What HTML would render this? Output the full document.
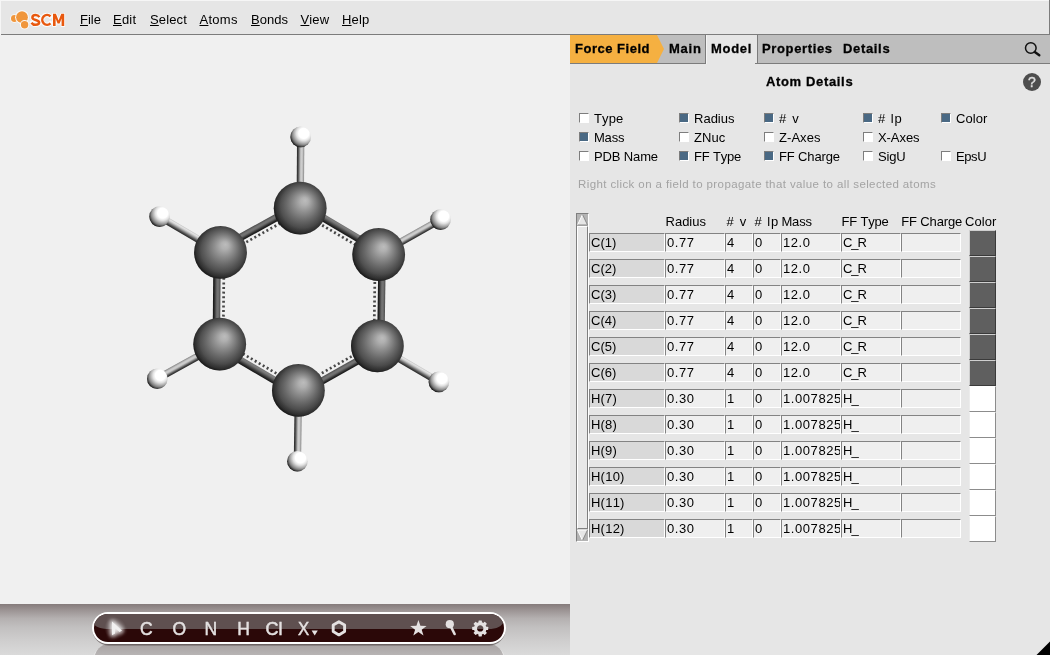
<!DOCTYPE html>
<html><head><meta charset="utf-8"><title>SCM</title>
<style>
html,body{margin:0;padding:0}
body{width:1050px;height:655px;overflow:hidden;position:relative;background:#e6e6e6;font-family:"Liberation Sans",sans-serif;color:#000}
.a{position:absolute}
.t{position:absolute;white-space:pre;font-kerning:none;line-height:16px;height:16px;font-size:13px}
.t.h{font-size:11.5px}
.b{font-weight:bold;-webkit-text-stroke:0.3px #000}
.u::first-letter{text-decoration:underline}
.cb{position:absolute;width:8px;height:8px;border:1px solid;border-color:#7d7d7d #fff #fff #7d7d7d;background:#fff}
.cb.on{background:#4a6984}
.cell{position:absolute;height:17px;border:1px solid;border-color:#838383 #fff #fff #838383;background:#efefef;box-sizing:content-box}
.cell.n{background:#d9d9d9}
.sw{position:absolute;left:969px;width:27px;height:25px;border:1px solid;box-sizing:border-box}
.sw.d{background:#5f5f5f;border-color:#cfcfcf #3a3a3a #3a3a3a #cfcfcf}
.sw.w{background:#fff;border-color:#fff #8c8c8c #8c8c8c #ececec}
</style></head><body>

<div class="a" style="left:0;top:0;width:1050px;height:35px;background:#e6e6e6"></div>
<div class="a" style="left:0;top:0;width:1050px;height:1px;background:#f6f6f6"></div>
<div class="a" style="left:0;top:0;width:1px;height:35px;background:#f6f6f6"></div>
<div class="a" style="left:1px;top:34px;width:1049px;height:1px;background:#7c7c7c"></div>
<div class="a" style="left:1049px;top:0;width:1px;height:35px;background:#7c7c7c"></div>
<div class="a" style="left:0;top:35px;width:570px;height:569px;background:#f0f0f0"></div>
<div class="a" style="left:570px;top:35px;width:480px;height:620px;background:#e6e6e6"></div>
<svg class="a" style="left:6px;top:8px" width="64" height="24" viewBox="6 8 64 24">
<circle cx="14.4" cy="18.5" r="4.2" fill="#fbfbfb"/>
<circle cx="14.4" cy="18.5" r="3.4" fill="#f0963c"/>
<circle cx="22" cy="17.2" r="6.9" fill="#fbfbfb"/>
<circle cx="24.6" cy="24.7" r="4.6" fill="#fbfbfb"/>
<circle cx="22" cy="17.2" r="5.9" fill="#f0963c"/>
<circle cx="24.6" cy="24.7" r="4.6" fill="#fbfbfb"/>
<circle cx="24.6" cy="24.7" r="3.7" fill="#f0963c"/>
<g fill="none" stroke="#fbfbfb" stroke-width="4.4" stroke-linejoin="round" stroke-linecap="round">
<path d="M39.2,16.9 C38.4,15.7 37.2,15.1 35.6,15.1 C33.6,15.1 32.4,16.1 32.4,17.5 C32.4,19.0 33.8,19.5 35.7,20.0 C37.7,20.5 39.1,21.1 39.1,22.6 C39.1,24.0 37.7,24.8 35.6,24.8 C33.8,24.8 32.5,24.1 31.7,22.9"/>
<path d="M50.3,16.6 A4.85,4.85 0 1 0 50.3,23.2"/>
<polygon points="53,26 53,13.8 55.9,13.8 58.6,20.4 61.3,13.8 64.2,13.8 64.2,26 61.6,26 61.6,18.6 59.6,23.5 57.6,23.5 55.6,18.6 55.6,26" stroke-width="1.8" fill="#fbfbfb"/>
</g>
<g fill="none" stroke="#e8580e" stroke-width="2.5">
<path d="M39.4,17.1 C38.5,15.7 37.2,15.1 35.6,15.1 C33.6,15.1 32.4,16.1 32.4,17.5 C32.4,19.0 33.8,19.5 35.7,20.0 C37.7,20.5 39.1,21.1 39.1,22.6 C39.1,24.0 37.7,24.8 35.6,24.8 C33.8,24.8 32.4,24.1 31.5,22.7"/>
<path d="M50.5,16.4 A4.85,4.85 0 1 0 50.5,23.4"/>
</g>
<polygon points="53,26 53,13.8 55.9,13.8 58.6,20.4 61.3,13.8 64.2,13.8 64.2,26 61.6,26 61.6,18.6 59.6,23.5 57.6,23.5 55.6,18.6 55.6,26" fill="#e8580e"/>
</svg>

<div class="a" style="left:570px;top:35px;width:480px;height:28px;background:#bebebe"></div>
<div class="a" style="left:570px;top:63px;width:480px;height:1px;background:#7c7c7c"></div>
<svg class="a" style="left:570px;top:35px" width="96" height="28"><polygon points="0,0 87,0 94,14 87,28 0,28" fill="#f5b041"/></svg>
<div class="a" style="left:705px;top:35px;width:53px;height:29px;background:#e6e6e6;border-left:1px solid #7c7c7c;border-right:1px solid #7c7c7c;box-sizing:border-box"></div>
<div class="a" style="left:706px;top:35px;width:1px;height:29px;background:#f4f4f4"></div>
<div class="a" style="left:755px;top:63px;width:3px;height:1px;background:#7c7c7c"></div>
<svg class="a" style="left:1020px;top:38px" width="24" height="22" viewBox="1020 38 24 22"><circle cx="1030.8" cy="48" r="5.3" fill="none" stroke="#111" stroke-width="1.5"/><line x1="1034.8" y1="52" x2="1039.3" y2="55.3" stroke="#111" stroke-width="2.4" stroke-linecap="round"/></svg>
<div class="a" style="left:1023px;top:73px;width:18px;height:18px;border-radius:9px;background:#4d4d4d;color:#dedede;-webkit-text-stroke:0.4px #dedede;font-size:14px;line-height:19px;text-align:center;will-change:transform">?</div>
<div class="cb" style="left:579px;top:113px"></div>
<div class="cb on" style="left:679px;top:113px"></div>
<div class="cb on" style="left:764px;top:113px"></div>
<div class="cb on" style="left:863px;top:113px"></div>
<div class="cb on" style="left:941px;top:113px"></div>
<div class="cb on" style="left:579px;top:132px"></div>
<div class="cb" style="left:679px;top:132px"></div>
<div class="cb" style="left:764px;top:132px"></div>
<div class="cb" style="left:863px;top:132px"></div>
<div class="cb" style="left:579px;top:151px"></div>
<div class="cb on" style="left:679px;top:151px"></div>
<div class="cb on" style="left:764px;top:151px"></div>
<div class="cb" style="left:863px;top:151px"></div>
<div class="cb" style="left:941px;top:151px"></div>
<div class="a" style="left:576px;top:213px;width:13px;height:329px;box-sizing:border-box;border:1px solid;border-color:#7f7f7f #fff #fff #7f7f7f;background:#b4b4b4"></div>
<div class="a" style="left:577px;top:226px;width:11px;height:303px;box-sizing:border-box;border:1px solid;border-color:#fff #7f7f7f #7f7f7f #fff;background:#e8e8e8"></div>
<svg class="a" style="left:577px;top:214px" width="11" height="12"><polygon points="0.5,11 5.5,0.5 10.5,11" fill="#e6e6e6"/><polyline points="0.5,11 5.5,0.5" fill="none" stroke="#fff" stroke-width="1"/><polyline points="5.5,0.5 10.5,11 0.5,11" fill="none" stroke="#8a8a8a" stroke-width="1"/></svg>
<svg class="a" style="left:577px;top:529px" width="11" height="12"><polygon points="0.5,1 10.5,1 5.5,11.5" fill="#e6e6e6"/><polyline points="10.5,1 0.5,1 5.5,11.5" fill="none" stroke="#fff" stroke-width="1"/><polyline points="5.5,11.5 10.5,1" fill="none" stroke="#8a8a8a" stroke-width="1"/></svg>

<div class="cell n" style="left:589px;top:233px;width:74px"></div>
<div class="cell" style="left:665px;top:233px;width:58px"></div>
<div class="cell" style="left:725px;top:233px;width:26px"></div>
<div class="cell" style="left:753px;top:233px;width:26px"></div>
<div class="cell" style="left:781px;top:233px;width:58px"></div>
<div class="cell" style="left:841px;top:233px;width:58px"></div>
<div class="cell" style="left:901px;top:233px;width:58px"></div>
<div class="sw d" style="top:230px;height:26px"></div>
<div class="cell n" style="left:589px;top:259px;width:74px"></div>
<div class="cell" style="left:665px;top:259px;width:58px"></div>
<div class="cell" style="left:725px;top:259px;width:26px"></div>
<div class="cell" style="left:753px;top:259px;width:26px"></div>
<div class="cell" style="left:781px;top:259px;width:58px"></div>
<div class="cell" style="left:841px;top:259px;width:58px"></div>
<div class="cell" style="left:901px;top:259px;width:58px"></div>
<div class="sw d" style="top:256px;height:26px"></div>
<div class="cell n" style="left:589px;top:285px;width:74px"></div>
<div class="cell" style="left:665px;top:285px;width:58px"></div>
<div class="cell" style="left:725px;top:285px;width:26px"></div>
<div class="cell" style="left:753px;top:285px;width:26px"></div>
<div class="cell" style="left:781px;top:285px;width:58px"></div>
<div class="cell" style="left:841px;top:285px;width:58px"></div>
<div class="cell" style="left:901px;top:285px;width:58px"></div>
<div class="sw d" style="top:282px;height:26px"></div>
<div class="cell n" style="left:589px;top:311px;width:74px"></div>
<div class="cell" style="left:665px;top:311px;width:58px"></div>
<div class="cell" style="left:725px;top:311px;width:26px"></div>
<div class="cell" style="left:753px;top:311px;width:26px"></div>
<div class="cell" style="left:781px;top:311px;width:58px"></div>
<div class="cell" style="left:841px;top:311px;width:58px"></div>
<div class="cell" style="left:901px;top:311px;width:58px"></div>
<div class="sw d" style="top:308px;height:26px"></div>
<div class="cell n" style="left:589px;top:337px;width:74px"></div>
<div class="cell" style="left:665px;top:337px;width:58px"></div>
<div class="cell" style="left:725px;top:337px;width:26px"></div>
<div class="cell" style="left:753px;top:337px;width:26px"></div>
<div class="cell" style="left:781px;top:337px;width:58px"></div>
<div class="cell" style="left:841px;top:337px;width:58px"></div>
<div class="cell" style="left:901px;top:337px;width:58px"></div>
<div class="sw d" style="top:334px;height:26px"></div>
<div class="cell n" style="left:589px;top:363px;width:74px"></div>
<div class="cell" style="left:665px;top:363px;width:58px"></div>
<div class="cell" style="left:725px;top:363px;width:26px"></div>
<div class="cell" style="left:753px;top:363px;width:26px"></div>
<div class="cell" style="left:781px;top:363px;width:58px"></div>
<div class="cell" style="left:841px;top:363px;width:58px"></div>
<div class="cell" style="left:901px;top:363px;width:58px"></div>
<div class="sw d" style="top:360px;height:26px"></div>
<div class="cell n" style="left:589px;top:389px;width:74px"></div>
<div class="cell" style="left:665px;top:389px;width:58px"></div>
<div class="cell" style="left:725px;top:389px;width:26px"></div>
<div class="cell" style="left:753px;top:389px;width:26px"></div>
<div class="cell" style="left:781px;top:389px;width:58px"></div>
<div class="cell" style="left:841px;top:389px;width:58px"></div>
<div class="cell" style="left:901px;top:389px;width:58px"></div>
<div class="sw w" style="top:386px;height:26px"></div>
<div class="cell n" style="left:589px;top:415px;width:74px"></div>
<div class="cell" style="left:665px;top:415px;width:58px"></div>
<div class="cell" style="left:725px;top:415px;width:26px"></div>
<div class="cell" style="left:753px;top:415px;width:26px"></div>
<div class="cell" style="left:781px;top:415px;width:58px"></div>
<div class="cell" style="left:841px;top:415px;width:58px"></div>
<div class="cell" style="left:901px;top:415px;width:58px"></div>
<div class="sw w" style="top:412px;height:26px"></div>
<div class="cell n" style="left:589px;top:441px;width:74px"></div>
<div class="cell" style="left:665px;top:441px;width:58px"></div>
<div class="cell" style="left:725px;top:441px;width:26px"></div>
<div class="cell" style="left:753px;top:441px;width:26px"></div>
<div class="cell" style="left:781px;top:441px;width:58px"></div>
<div class="cell" style="left:841px;top:441px;width:58px"></div>
<div class="cell" style="left:901px;top:441px;width:58px"></div>
<div class="sw w" style="top:438px;height:26px"></div>
<div class="cell n" style="left:589px;top:467px;width:74px"></div>
<div class="cell" style="left:665px;top:467px;width:58px"></div>
<div class="cell" style="left:725px;top:467px;width:26px"></div>
<div class="cell" style="left:753px;top:467px;width:26px"></div>
<div class="cell" style="left:781px;top:467px;width:58px"></div>
<div class="cell" style="left:841px;top:467px;width:58px"></div>
<div class="cell" style="left:901px;top:467px;width:58px"></div>
<div class="sw w" style="top:464px;height:26px"></div>
<div class="cell n" style="left:589px;top:493px;width:74px"></div>
<div class="cell" style="left:665px;top:493px;width:58px"></div>
<div class="cell" style="left:725px;top:493px;width:26px"></div>
<div class="cell" style="left:753px;top:493px;width:26px"></div>
<div class="cell" style="left:781px;top:493px;width:58px"></div>
<div class="cell" style="left:841px;top:493px;width:58px"></div>
<div class="cell" style="left:901px;top:493px;width:58px"></div>
<div class="sw w" style="top:490px;height:26px"></div>
<div class="cell n" style="left:589px;top:519px;width:74px"></div>
<div class="cell" style="left:665px;top:519px;width:58px"></div>
<div class="cell" style="left:725px;top:519px;width:26px"></div>
<div class="cell" style="left:753px;top:519px;width:26px"></div>
<div class="cell" style="left:781px;top:519px;width:58px"></div>
<div class="cell" style="left:841px;top:519px;width:58px"></div>
<div class="cell" style="left:901px;top:519px;width:58px"></div>
<div class="sw w" style="top:516px;height:26px"></div>
<svg class="a" style="left:1036px;top:641px" width="14" height="14"><polygon points="14,0.5 14,14 0.5,14" fill="#000"/></svg>
<svg class="a" style="left:0;top:35px" width="570" height="569" viewBox="0 35 570 569">
<defs>
<radialGradient id="gc" cx="50%" cy="50%" r="61%" fx="59.5%" fy="35%">
<stop offset="0" stop-color="#bcbcbc"/><stop offset="0.12" stop-color="#b0b0b0"/><stop offset="0.30" stop-color="#8e8e8e"/><stop offset="0.50" stop-color="#6a6a6a"/><stop offset="0.68" stop-color="#4c4c4c"/><stop offset="0.85" stop-color="#343434"/><stop offset="1" stop-color="#1c1c1c"/>
</radialGradient>
<radialGradient id="gh" cx="65%" cy="33%" r="80%">
<stop offset="0" stop-color="#fff"/><stop offset="0.31" stop-color="#fff"/><stop offset="0.45" stop-color="#e2e2e2"/><stop offset="0.59" stop-color="#b2b2b2"/><stop offset="0.73" stop-color="#7e7e7e"/><stop offset="0.87" stop-color="#4a4a4a"/><stop offset="1" stop-color="#242424"/>
</radialGradient>
<radialGradient id="gce" cx="55%" cy="45%" r="57%">
<stop offset="0" stop-color="#000" stop-opacity="0"/><stop offset="0.74" stop-color="#000" stop-opacity="0"/><stop offset="0.90" stop-color="#000" stop-opacity="0.2"/><stop offset="1" stop-color="#000" stop-opacity="0.55"/>
</radialGradient>
<radialGradient id="ghe" cx="56%" cy="44%" r="58%">
<stop offset="0" stop-color="#000" stop-opacity="0"/><stop offset="0.78" stop-color="#000" stop-opacity="0"/><stop offset="0.90" stop-color="#000" stop-opacity="0.22"/><stop offset="1" stop-color="#000" stop-opacity="0.7"/>
</radialGradient>
</defs>
<linearGradient id="b1" gradientUnits="userSpaceOnUse" x1="343.06" y1="225.23" x2="339.30" y2="231.61"><stop offset="0.000" stop-color="#6e6e6e"/><stop offset="0.083" stop-color="#777777"/><stop offset="0.167" stop-color="#7f7f7f"/><stop offset="0.250" stop-color="#797979"/><stop offset="0.333" stop-color="#737373"/><stop offset="0.417" stop-color="#666666"/><stop offset="0.500" stop-color="#595959"/><stop offset="0.583" stop-color="#4b4b4b"/><stop offset="0.667" stop-color="#3c3c3c"/><stop offset="0.750" stop-color="#2f2f2f"/><stop offset="0.833" stop-color="#252525"/><stop offset="0.917" stop-color="#1c1c1c"/><stop offset="1.000" stop-color="#171717"/></linearGradient>
<line x1="301.93" y1="205.27" x2="380.43" y2="251.57" stroke="url(#b1)" stroke-width="7.4"/>
<line x1="298.42" y1="211.21" x2="376.92" y2="257.51" stroke="#474747" stroke-width="2.7" stroke-dasharray="2 2.6"/>
<linearGradient id="b2" gradientUnits="userSpaceOnUse" x1="385.15" y1="300.30" x2="377.75" y2="300.20"><stop offset="0.000" stop-color="#4a4a4a"/><stop offset="0.083" stop-color="#585858"/><stop offset="0.167" stop-color="#646464"/><stop offset="0.250" stop-color="#6f6f6f"/><stop offset="0.333" stop-color="#737373"/><stop offset="0.417" stop-color="#727272"/><stop offset="0.500" stop-color="#6b6b6b"/><stop offset="0.583" stop-color="#5b5b5b"/><stop offset="0.667" stop-color="#4a4a4a"/><stop offset="0.750" stop-color="#373737"/><stop offset="0.833" stop-color="#282828"/><stop offset="0.917" stop-color="#1d1d1d"/><stop offset="1.000" stop-color="#171717"/></linearGradient>
<line x1="382.10" y1="254.55" x2="380.80" y2="345.95" stroke="url(#b2)" stroke-width="7.4"/>
<line x1="375.20" y1="254.45" x2="373.90" y2="345.85" stroke="#474747" stroke-width="2.7" stroke-dasharray="2 2.6"/>
<linearGradient id="b3" gradientUnits="userSpaceOnUse" x1="341.38" y1="374.34" x2="337.75" y2="367.89"><stop offset="0.000" stop-color="#171717"/><stop offset="0.083" stop-color="#1d1d1d"/><stop offset="0.167" stop-color="#282828"/><stop offset="0.250" stop-color="#373737"/><stop offset="0.333" stop-color="#4a4a4a"/><stop offset="0.417" stop-color="#5b5b5b"/><stop offset="0.500" stop-color="#6b6b6b"/><stop offset="0.583" stop-color="#727272"/><stop offset="0.667" stop-color="#737373"/><stop offset="0.750" stop-color="#6f6f6f"/><stop offset="0.833" stop-color="#646464"/><stop offset="0.917" stop-color="#585858"/><stop offset="1.000" stop-color="#4a4a4a"/></linearGradient>
<line x1="379.07" y1="348.86" x2="300.07" y2="393.36" stroke="url(#b3)" stroke-width="7.4"/>
<line x1="375.68" y1="342.85" x2="296.68" y2="387.35" stroke="#474747" stroke-width="2.7" stroke-dasharray="2 2.6"/>
<linearGradient id="b4" gradientUnits="userSpaceOnUse" x1="255.46" y1="373.42" x2="259.20" y2="367.04"><stop offset="0.000" stop-color="#171717"/><stop offset="0.083" stop-color="#1c1c1c"/><stop offset="0.167" stop-color="#252525"/><stop offset="0.250" stop-color="#2f2f2f"/><stop offset="0.333" stop-color="#3c3c3c"/><stop offset="0.417" stop-color="#4b4b4b"/><stop offset="0.500" stop-color="#595959"/><stop offset="0.583" stop-color="#666666"/><stop offset="0.667" stop-color="#737373"/><stop offset="0.750" stop-color="#797979"/><stop offset="0.833" stop-color="#7f7f7f"/><stop offset="0.917" stop-color="#777777"/><stop offset="1.000" stop-color="#6e6e6e"/></linearGradient>
<line x1="296.68" y1="393.33" x2="217.98" y2="347.13" stroke="url(#b4)" stroke-width="7.4"/>
<line x1="300.17" y1="387.38" x2="221.47" y2="341.18" stroke="#474747" stroke-width="2.7" stroke-dasharray="2 2.6"/>
<linearGradient id="b5" gradientUnits="userSpaceOnUse" x1="213.00" y1="298.24" x2="220.40" y2="298.30"><stop offset="0.000" stop-color="#171717"/><stop offset="0.083" stop-color="#1d1d1d"/><stop offset="0.167" stop-color="#282828"/><stop offset="0.250" stop-color="#373737"/><stop offset="0.333" stop-color="#4a4a4a"/><stop offset="0.417" stop-color="#5b5b5b"/><stop offset="0.500" stop-color="#6b6b6b"/><stop offset="0.583" stop-color="#727272"/><stop offset="0.667" stop-color="#737373"/><stop offset="0.750" stop-color="#6f6f6f"/><stop offset="0.833" stop-color="#646464"/><stop offset="0.917" stop-color="#585858"/><stop offset="1.000" stop-color="#4a4a4a"/></linearGradient>
<line x1="216.30" y1="344.17" x2="217.10" y2="252.37" stroke="url(#b5)" stroke-width="7.4"/>
<line x1="223.20" y1="344.23" x2="224.00" y2="252.43" stroke="#474747" stroke-width="2.7" stroke-dasharray="2 2.6"/>
<linearGradient id="b6" gradientUnits="userSpaceOnUse" x1="256.91" y1="224.09" x2="260.50" y2="230.56"><stop offset="0.000" stop-color="#4a4a4a"/><stop offset="0.083" stop-color="#585858"/><stop offset="0.167" stop-color="#646464"/><stop offset="0.250" stop-color="#6f6f6f"/><stop offset="0.333" stop-color="#737373"/><stop offset="0.417" stop-color="#727272"/><stop offset="0.500" stop-color="#6b6b6b"/><stop offset="0.583" stop-color="#5b5b5b"/><stop offset="0.667" stop-color="#4a4a4a"/><stop offset="0.750" stop-color="#373737"/><stop offset="0.833" stop-color="#282828"/><stop offset="0.917" stop-color="#1d1d1d"/><stop offset="1.000" stop-color="#171717"/></linearGradient>
<line x1="218.85" y1="249.43" x2="298.55" y2="205.23" stroke="url(#b6)" stroke-width="7.4"/>
<line x1="222.20" y1="255.46" x2="301.90" y2="211.26" stroke="#474747" stroke-width="2.7" stroke-dasharray="2 2.6"/>
<linearGradient id="b7" gradientUnits="userSpaceOnUse" x1="296.80" y1="172.52" x2="304.10" y2="172.58"><stop offset="0.000" stop-color="#292929"/><stop offset="0.083" stop-color="#353535"/><stop offset="0.167" stop-color="#494949"/><stop offset="0.250" stop-color="#636363"/><stop offset="0.333" stop-color="#848484"/><stop offset="0.417" stop-color="#a3a3a3"/><stop offset="0.500" stop-color="#c0c0c0"/><stop offset="0.583" stop-color="#cccccc"/><stop offset="0.667" stop-color="#cdcdcd"/><stop offset="0.750" stop-color="#c7c7c7"/><stop offset="0.833" stop-color="#b3b3b3"/><stop offset="0.917" stop-color="#9d9d9d"/><stop offset="1.000" stop-color="#848484"/></linearGradient>
<line x1="300.20" y1="208.20" x2="300.70" y2="136.90" stroke="url(#b7)" stroke-width="7.3"/>
<linearGradient id="b8" gradientUnits="userSpaceOnUse" x1="407.86" y1="233.87" x2="411.44" y2="240.23"><stop offset="0.000" stop-color="#848484"/><stop offset="0.083" stop-color="#9d9d9d"/><stop offset="0.167" stop-color="#b3b3b3"/><stop offset="0.250" stop-color="#c7c7c7"/><stop offset="0.333" stop-color="#cdcdcd"/><stop offset="0.417" stop-color="#cccccc"/><stop offset="0.500" stop-color="#c0c0c0"/><stop offset="0.583" stop-color="#a3a3a3"/><stop offset="0.667" stop-color="#848484"/><stop offset="0.750" stop-color="#636363"/><stop offset="0.833" stop-color="#494949"/><stop offset="0.917" stop-color="#353535"/><stop offset="1.000" stop-color="#292929"/></linearGradient>
<line x1="378.70" y1="254.50" x2="440.60" y2="219.60" stroke="url(#b8)" stroke-width="7.3"/>
<linearGradient id="b9" gradientUnits="userSpaceOnUse" x1="409.99" y1="360.75" x2="406.31" y2="367.05"><stop offset="0.000" stop-color="#c5c5c5"/><stop offset="0.083" stop-color="#d5d5d5"/><stop offset="0.167" stop-color="#e3e3e3"/><stop offset="0.250" stop-color="#d9d9d9"/><stop offset="0.333" stop-color="#cdcdcd"/><stop offset="0.417" stop-color="#b6b6b6"/><stop offset="0.500" stop-color="#9f9f9f"/><stop offset="0.583" stop-color="#868686"/><stop offset="0.667" stop-color="#6c6c6c"/><stop offset="0.750" stop-color="#545454"/><stop offset="0.833" stop-color="#424242"/><stop offset="0.917" stop-color="#333333"/><stop offset="1.000" stop-color="#292929"/></linearGradient>
<line x1="377.40" y1="345.90" x2="438.90" y2="381.90" stroke="url(#b9)" stroke-width="7.3"/>
<linearGradient id="b10" gradientUnits="userSpaceOnUse" x1="301.55" y1="425.90" x2="294.25" y2="425.80"><stop offset="0.000" stop-color="#848484"/><stop offset="0.083" stop-color="#9d9d9d"/><stop offset="0.167" stop-color="#b3b3b3"/><stop offset="0.250" stop-color="#c7c7c7"/><stop offset="0.333" stop-color="#cdcdcd"/><stop offset="0.417" stop-color="#cccccc"/><stop offset="0.500" stop-color="#c0c0c0"/><stop offset="0.583" stop-color="#a3a3a3"/><stop offset="0.667" stop-color="#848484"/><stop offset="0.750" stop-color="#636363"/><stop offset="0.833" stop-color="#494949"/><stop offset="0.917" stop-color="#353535"/><stop offset="1.000" stop-color="#292929"/></linearGradient>
<line x1="298.40" y1="390.40" x2="297.40" y2="461.30" stroke="url(#b10)" stroke-width="7.3"/>
<linearGradient id="b11" gradientUnits="userSpaceOnUse" x1="190.27" y1="364.69" x2="186.73" y2="358.31"><stop offset="0.000" stop-color="#292929"/><stop offset="0.083" stop-color="#353535"/><stop offset="0.167" stop-color="#484848"/><stop offset="0.250" stop-color="#626262"/><stop offset="0.333" stop-color="#848484"/><stop offset="0.417" stop-color="#a2a2a2"/><stop offset="0.500" stop-color="#c0c0c0"/><stop offset="0.583" stop-color="#cbcbcb"/><stop offset="0.667" stop-color="#cdcdcd"/><stop offset="0.750" stop-color="#c7c7c7"/><stop offset="0.833" stop-color="#b4b4b4"/><stop offset="0.917" stop-color="#9e9e9e"/><stop offset="1.000" stop-color="#858585"/></linearGradient>
<line x1="219.70" y1="344.20" x2="157.30" y2="378.80" stroke="url(#b11)" stroke-width="7.3"/>
<linearGradient id="b12" gradientUnits="userSpaceOnUse" x1="188.20" y1="237.65" x2="191.90" y2="231.35"><stop offset="0.000" stop-color="#292929"/><stop offset="0.083" stop-color="#333333"/><stop offset="0.167" stop-color="#424242"/><stop offset="0.250" stop-color="#545454"/><stop offset="0.333" stop-color="#6c6c6c"/><stop offset="0.417" stop-color="#868686"/><stop offset="0.500" stop-color="#9f9f9f"/><stop offset="0.583" stop-color="#b6b6b6"/><stop offset="0.667" stop-color="#cdcdcd"/><stop offset="0.750" stop-color="#d9d9d9"/><stop offset="0.833" stop-color="#e3e3e3"/><stop offset="0.917" stop-color="#d5d5d5"/><stop offset="1.000" stop-color="#c5c5c5"/></linearGradient>
<line x1="220.50" y1="252.40" x2="159.60" y2="216.60" stroke="url(#b12)" stroke-width="7.3"/>
<circle cx="300.2" cy="208.2" r="26.4" fill="url(#gc)"/><circle cx="300.2" cy="208.2" r="26.4" fill="url(#gce)"/>
<circle cx="378.7" cy="254.5" r="26.4" fill="url(#gc)"/><circle cx="378.7" cy="254.5" r="26.4" fill="url(#gce)"/>
<circle cx="377.4" cy="345.9" r="26.4" fill="url(#gc)"/><circle cx="377.4" cy="345.9" r="26.4" fill="url(#gce)"/>
<circle cx="298.4" cy="390.4" r="26.4" fill="url(#gc)"/><circle cx="298.4" cy="390.4" r="26.4" fill="url(#gce)"/>
<circle cx="219.7" cy="344.2" r="26.4" fill="url(#gc)"/><circle cx="219.7" cy="344.2" r="26.4" fill="url(#gce)"/>
<circle cx="220.5" cy="252.4" r="26.4" fill="url(#gc)"/><circle cx="220.5" cy="252.4" r="26.4" fill="url(#gce)"/>
<circle cx="300.7" cy="136.9" r="10.3" fill="url(#gh)"/><circle cx="300.7" cy="136.9" r="10.3" fill="url(#ghe)"/>
<circle cx="440.6" cy="219.6" r="10.3" fill="url(#gh)"/><circle cx="440.6" cy="219.6" r="10.3" fill="url(#ghe)"/>
<circle cx="438.9" cy="381.9" r="10.3" fill="url(#gh)"/><circle cx="438.9" cy="381.9" r="10.3" fill="url(#ghe)"/>
<circle cx="297.4" cy="461.3" r="10.3" fill="url(#gh)"/><circle cx="297.4" cy="461.3" r="10.3" fill="url(#ghe)"/>
<circle cx="157.3" cy="378.8" r="10.3" fill="url(#gh)"/><circle cx="157.3" cy="378.8" r="10.3" fill="url(#ghe)"/>
<circle cx="159.6" cy="216.6" r="10.3" fill="url(#gh)"/><circle cx="159.6" cy="216.6" r="10.3" fill="url(#ghe)"/>
</svg>
<div class="a" style="left:0;top:604px;width:570px;height:51px;background:linear-gradient(to bottom,#857b7b 0,#9b9393 12%,#b4b0b0 28%,#c2c0c0 46%,#cfcece 72%,#dadada 100%)"></div>
<svg class="a" style="left:80px;top:604px;will-change:transform" width="440" height="51" viewBox="80 604 440 51">
<defs>
<clipPath id="pc"><rect x="94" y="614" width="410" height="28" rx="14"/></clipPath>
<linearGradient id="rf" x1="0" y1="0" x2="0" y2="1"><stop offset="0" stop-color="#a8a3a3"/><stop offset="0.4" stop-color="#b9b6b6"/><stop offset="1" stop-color="#c8c6c6"/></linearGradient>
<filter id="bl" x="-1" y="-1" width="3" height="3"><feGaussianBlur stdDeviation="1.9"/></filter>
<radialGradient id="glow"><stop offset="0" stop-color="#fff" stop-opacity="0.75"/><stop offset="0.5" stop-color="#fff" stop-opacity="0.3"/><stop offset="1" stop-color="#fff" stop-opacity="0"/></radialGradient>
</defs>
<!-- reflection -->
<rect x="92.5" y="645" width="413" height="32" rx="16" fill="#e6e5e5"/>
<rect x="94.5" y="644" width="409" height="31" rx="14.5" fill="url(#rf)"/>
<!-- shadow -->
<rect x="92.5" y="613" width="413" height="32.6" rx="16.3" fill="#3a3030" opacity="0.55"/>
<!-- pill -->
<rect x="92" y="612" width="414" height="32" rx="16" fill="#fff"/>
<rect x="94" y="614" width="410" height="28" rx="14" fill="#2b0808"/>
<g clip-path="url(#pc)">
<path d="M94,614 H504 V621 C502,626.5 497,629 488,629 H110 C101,629 96,627.5 94,624 Z" fill="#5f5050"/>
<circle cx="115" cy="628.3" r="11" fill="url(#glow)" opacity="0.55"/>
<polygon points="112,621.5 122,630.4 119.6,631.9 115.2,628.3 115,633.6 112,635.2" fill="#fff" stroke="#fff" stroke-width="3.5" stroke-linejoin="round" filter="url(#bl)" opacity="0.85"/>
</g>
<!-- cursor -->
<polygon points="112,621.5 122,630.4 119.6,631.9 115.2,628.3 115,633.6 112,635.2" fill="#f2f0f0"/>
<g fill="#e4e1e1" font-family="Liberation Sans" font-size="17.5" stroke="#e4e1e1" stroke-width="0.45">
<text x="140" y="634.6">C</text>
<text x="172.6" y="634.6">O</text>
<text x="204.6" y="634.6">N</text>
<text x="237.2" y="634.6">H</text>
<text x="265.6" y="634.6" textLength="17" lengthAdjust="spacingAndGlyphs">Cl</text>
<text x="298" y="634.6" textLength="11.2" lengthAdjust="spacingAndGlyphs">X</text>
</g>
<polygon points="311.6,630.6 317.8,630.6 314.7,635.6" fill="#e4e1e1"/>
<polygon points="338.9,621.7 344.6,625 344.6,631.6 338.9,634.9 333.2,631.6 333.2,625" fill="none" stroke="#e4e1e1" stroke-width="2.9" stroke-linejoin="round"/>
<!-- star -->
<polygon id="star" fill="#e4e1e1" points="418.4,620.0 420.4,625.8 426.6,625.9 421.7,629.7 423.5,635.6 418.4,632.1 413.3,635.6 415.1,629.7 410.2,625.9 416.4,625.8"/>
<!-- lollipop -->
<circle cx="449.8" cy="624.2" r="4.1" fill="#e4e1e1"/>
<line x1="450.6" y1="626" x2="454.6" y2="634" stroke="#e4e1e1" stroke-width="2.6" stroke-linecap="round"/>
<!-- gear -->
<g transform="translate(480.2,628.4)">
<circle r="4.75" fill="none" stroke="#e4e1e1" stroke-width="3.1"/>
<g fill="#e4e1e1">
<rect x="-1.7" y="-8" width="3.4" height="3.2" rx="0.6"/>
<rect x="-1.7" y="-8" width="3.4" height="3.2" rx="0.6" transform="rotate(45)"/>
<rect x="-1.7" y="-8" width="3.4" height="3.2" rx="0.6" transform="rotate(90)"/>
<rect x="-1.7" y="-8" width="3.4" height="3.2" rx="0.6" transform="rotate(135)"/>
<rect x="-1.7" y="-8" width="3.4" height="3.2" rx="0.6" transform="rotate(180)"/>
<rect x="-1.7" y="-8" width="3.4" height="3.2" rx="0.6" transform="rotate(225)"/>
<rect x="-1.7" y="-8" width="3.4" height="3.2" rx="0.6" transform="rotate(270)"/>
<rect x="-1.7" y="-8" width="3.4" height="3.2" rx="0.6" transform="rotate(315)"/>
</g></g>
</svg>

<div class="a" style="left:0;top:0;width:1050px;height:655px;will-change:transform">
<div class="t" style="left:80px;top:11.50px;letter-spacing:0.0px"><u>F</u>ile</div>
<div class="t" style="left:113px;top:11.50px;letter-spacing:0.211px"><u>E</u>dit</div>
<div class="t" style="left:150px;top:11.50px;letter-spacing:0.148px"><u>S</u>elect</div>
<div class="t" style="left:199.5px;top:11.50px;letter-spacing:0.272px"><u>A</u>toms</div>
<div class="t" style="left:251px;top:11.50px;letter-spacing:0.037px"><u>B</u>onds</div>
<div class="t" style="left:300.5px;top:11.50px;letter-spacing:0.141px"><u>V</u>iew</div>
<div class="t" style="left:342px;top:11.50px;letter-spacing:0.152px"><u>H</u>elp</div>
<div class="t b" style="left:575px;top:40.50px;letter-spacing:0.509px">Force Field</div>
<div class="t b" style="left:669px;top:40.50px;letter-spacing:0.77px">Main</div>
<div class="t b" style="left:711px;top:40.50px;letter-spacing:0.694px">Model</div>
<div class="t b" style="left:762px;top:40.50px;letter-spacing:0.642px">Properties</div>
<div class="t b" style="left:843px;top:40.50px;letter-spacing:0.667px">Details</div>
<div class="t b" style="left:766px;top:73.50px;letter-spacing:0.65px">Atom Details</div>
<div class="t" style="left:594px;top:110.50px;letter-spacing:0.133px">Type</div>
<div class="t" style="left:694px;top:110.50px;letter-spacing:0.005px">Radius</div>
<div class="t" style="left:779px;top:110.50px;letter-spacing:1.214px"># v</div>
<div class="t" style="left:878px;top:110.50px;letter-spacing:0.965px"># lp</div>
<div class="t" style="left:956px;top:110.50px;letter-spacing:0.053px">Color</div>
<div class="t" style="left:594px;top:129.50px;letter-spacing:-0.211px">Mass</div>
<div class="t" style="left:694px;top:129.50px;letter-spacing:0.086px">ZNuc</div>
<div class="t" style="left:779px;top:129.50px;letter-spacing:0.055px">Z-Axes</div>
<div class="t" style="left:878px;top:129.50px;letter-spacing:-0.068px">X-Axes</div>
<div class="t" style="left:594px;top:148.50px;letter-spacing:-0.137px">PDB Name</div>
<div class="t" style="left:694px;top:148.50px;letter-spacing:-0.192px">FF Type</div>
<div class="t" style="left:779px;top:148.50px;letter-spacing:-0.139px">FF Charge</div>
<div class="t" style="left:878px;top:148.50px;letter-spacing:-0.207px">SigU</div>
<div class="t" style="left:956px;top:148.50px;letter-spacing:-0.391px">EpsU</div>
<div class="t h" style="left:578px;top:176.02px;letter-spacing:0.397px;color:#a3a3a3">Right click on a field to propagate that value to all selected atoms</div>
<div class="t" style="left:665.5px;top:213.50px;letter-spacing:0.005px">Radius</div>
<div class="t" style="left:726.5px;top:213.50px;letter-spacing:1.214px"># v</div>
<div class="t" style="left:754.5px;top:213.50px;letter-spacing:0.965px"># lp</div>
<div class="t" style="left:781.5px;top:213.50px;letter-spacing:-0.211px">Mass</div>
<div class="t" style="left:841.5px;top:213.50px;letter-spacing:-0.192px">FF Type</div>
<div class="t" style="left:901.3px;top:213.50px;letter-spacing:-0.139px">FF Charge</div>
<div class="t" style="left:965px;top:213.50px;letter-spacing:0.053px">Color</div>
<div class="t" style="left:591px;top:234.50px;letter-spacing:0.027px;width:73px;overflow:hidden">C(1)</div>
<div class="t" style="left:667px;top:234.50px;letter-spacing:0.552px;width:57px;overflow:hidden">0.77</div>
<div class="t" style="left:727px;top:234.50px;letter-spacing:0.406px;width:25px;overflow:hidden">4</div>
<div class="t" style="left:755px;top:234.50px;letter-spacing:0.406px;width:25px;overflow:hidden">0</div>
<div class="t" style="left:783px;top:234.50px;letter-spacing:0.552px;width:57px;overflow:hidden">12.0</div>
<div class="t" style="left:843px;top:234.50px;letter-spacing:-1.099px;width:57px;overflow:hidden">C_R</div>
<div class="t" style="left:591px;top:260.50px;letter-spacing:0.027px;width:73px;overflow:hidden">C(2)</div>
<div class="t" style="left:667px;top:260.50px;letter-spacing:0.552px;width:57px;overflow:hidden">0.77</div>
<div class="t" style="left:727px;top:260.50px;letter-spacing:0.406px;width:25px;overflow:hidden">4</div>
<div class="t" style="left:755px;top:260.50px;letter-spacing:0.406px;width:25px;overflow:hidden">0</div>
<div class="t" style="left:783px;top:260.50px;letter-spacing:0.552px;width:57px;overflow:hidden">12.0</div>
<div class="t" style="left:843px;top:260.50px;letter-spacing:-1.099px;width:57px;overflow:hidden">C_R</div>
<div class="t" style="left:591px;top:286.50px;letter-spacing:0.027px;width:73px;overflow:hidden">C(3)</div>
<div class="t" style="left:667px;top:286.50px;letter-spacing:0.552px;width:57px;overflow:hidden">0.77</div>
<div class="t" style="left:727px;top:286.50px;letter-spacing:0.406px;width:25px;overflow:hidden">4</div>
<div class="t" style="left:755px;top:286.50px;letter-spacing:0.406px;width:25px;overflow:hidden">0</div>
<div class="t" style="left:783px;top:286.50px;letter-spacing:0.552px;width:57px;overflow:hidden">12.0</div>
<div class="t" style="left:843px;top:286.50px;letter-spacing:-1.099px;width:57px;overflow:hidden">C_R</div>
<div class="t" style="left:591px;top:312.50px;letter-spacing:0.027px;width:73px;overflow:hidden">C(4)</div>
<div class="t" style="left:667px;top:312.50px;letter-spacing:0.552px;width:57px;overflow:hidden">0.77</div>
<div class="t" style="left:727px;top:312.50px;letter-spacing:0.406px;width:25px;overflow:hidden">4</div>
<div class="t" style="left:755px;top:312.50px;letter-spacing:0.406px;width:25px;overflow:hidden">0</div>
<div class="t" style="left:783px;top:312.50px;letter-spacing:0.552px;width:57px;overflow:hidden">12.0</div>
<div class="t" style="left:843px;top:312.50px;letter-spacing:-1.099px;width:57px;overflow:hidden">C_R</div>
<div class="t" style="left:591px;top:338.50px;letter-spacing:0.027px;width:73px;overflow:hidden">C(5)</div>
<div class="t" style="left:667px;top:338.50px;letter-spacing:0.552px;width:57px;overflow:hidden">0.77</div>
<div class="t" style="left:727px;top:338.50px;letter-spacing:0.406px;width:25px;overflow:hidden">4</div>
<div class="t" style="left:755px;top:338.50px;letter-spacing:0.406px;width:25px;overflow:hidden">0</div>
<div class="t" style="left:783px;top:338.50px;letter-spacing:0.552px;width:57px;overflow:hidden">12.0</div>
<div class="t" style="left:843px;top:338.50px;letter-spacing:-1.099px;width:57px;overflow:hidden">C_R</div>
<div class="t" style="left:591px;top:364.50px;letter-spacing:0.027px;width:73px;overflow:hidden">C(6)</div>
<div class="t" style="left:667px;top:364.50px;letter-spacing:0.552px;width:57px;overflow:hidden">0.77</div>
<div class="t" style="left:727px;top:364.50px;letter-spacing:0.406px;width:25px;overflow:hidden">4</div>
<div class="t" style="left:755px;top:364.50px;letter-spacing:0.406px;width:25px;overflow:hidden">0</div>
<div class="t" style="left:783px;top:364.50px;letter-spacing:0.552px;width:57px;overflow:hidden">12.0</div>
<div class="t" style="left:843px;top:364.50px;letter-spacing:-1.099px;width:57px;overflow:hidden">C_R</div>
<div class="t" style="left:591px;top:390.50px;letter-spacing:0.188px;width:73px;overflow:hidden">H(7)</div>
<div class="t" style="left:667px;top:390.50px;letter-spacing:0.552px;width:57px;overflow:hidden">0.30</div>
<div class="t" style="left:727px;top:390.50px;letter-spacing:0.406px;width:25px;overflow:hidden">1</div>
<div class="t" style="left:755px;top:390.50px;letter-spacing:0.406px;width:25px;overflow:hidden">0</div>
<div class="t" style="left:783px;top:390.50px;letter-spacing:0.579px;width:57px;overflow:hidden">1.007825</div>
<div class="t" style="left:843px;top:390.50px;letter-spacing:-0.797px;width:57px;overflow:hidden">H_</div>
<div class="t" style="left:591px;top:416.50px;letter-spacing:0.188px;width:73px;overflow:hidden">H(8)</div>
<div class="t" style="left:667px;top:416.50px;letter-spacing:0.552px;width:57px;overflow:hidden">0.30</div>
<div class="t" style="left:727px;top:416.50px;letter-spacing:0.406px;width:25px;overflow:hidden">1</div>
<div class="t" style="left:755px;top:416.50px;letter-spacing:0.406px;width:25px;overflow:hidden">0</div>
<div class="t" style="left:783px;top:416.50px;letter-spacing:0.579px;width:57px;overflow:hidden">1.007825</div>
<div class="t" style="left:843px;top:416.50px;letter-spacing:-0.797px;width:57px;overflow:hidden">H_</div>
<div class="t" style="left:591px;top:442.50px;letter-spacing:0.188px;width:73px;overflow:hidden">H(9)</div>
<div class="t" style="left:667px;top:442.50px;letter-spacing:0.552px;width:57px;overflow:hidden">0.30</div>
<div class="t" style="left:727px;top:442.50px;letter-spacing:0.406px;width:25px;overflow:hidden">1</div>
<div class="t" style="left:755px;top:442.50px;letter-spacing:0.406px;width:25px;overflow:hidden">0</div>
<div class="t" style="left:783px;top:442.50px;letter-spacing:0.579px;width:57px;overflow:hidden">1.007825</div>
<div class="t" style="left:843px;top:442.50px;letter-spacing:-0.797px;width:57px;overflow:hidden">H_</div>
<div class="t" style="left:591px;top:468.50px;letter-spacing:0.228px;width:73px;overflow:hidden">H(10)</div>
<div class="t" style="left:667px;top:468.50px;letter-spacing:0.552px;width:57px;overflow:hidden">0.30</div>
<div class="t" style="left:727px;top:468.50px;letter-spacing:0.406px;width:25px;overflow:hidden">1</div>
<div class="t" style="left:755px;top:468.50px;letter-spacing:0.406px;width:25px;overflow:hidden">0</div>
<div class="t" style="left:783px;top:468.50px;letter-spacing:0.579px;width:57px;overflow:hidden">1.007825</div>
<div class="t" style="left:843px;top:468.50px;letter-spacing:-0.797px;width:57px;overflow:hidden">H_</div>
<div class="t" style="left:591px;top:494.50px;letter-spacing:0.228px;width:73px;overflow:hidden">H(11)</div>
<div class="t" style="left:667px;top:494.50px;letter-spacing:0.552px;width:57px;overflow:hidden">0.30</div>
<div class="t" style="left:727px;top:494.50px;letter-spacing:0.406px;width:25px;overflow:hidden">1</div>
<div class="t" style="left:755px;top:494.50px;letter-spacing:0.406px;width:25px;overflow:hidden">0</div>
<div class="t" style="left:783px;top:494.50px;letter-spacing:0.579px;width:57px;overflow:hidden">1.007825</div>
<div class="t" style="left:843px;top:494.50px;letter-spacing:-0.797px;width:57px;overflow:hidden">H_</div>
<div class="t" style="left:591px;top:520.50px;letter-spacing:0.228px;width:73px;overflow:hidden">H(12)</div>
<div class="t" style="left:667px;top:520.50px;letter-spacing:0.552px;width:57px;overflow:hidden">0.30</div>
<div class="t" style="left:727px;top:520.50px;letter-spacing:0.406px;width:25px;overflow:hidden">1</div>
<div class="t" style="left:755px;top:520.50px;letter-spacing:0.406px;width:25px;overflow:hidden">0</div>
<div class="t" style="left:783px;top:520.50px;letter-spacing:0.579px;width:57px;overflow:hidden">1.007825</div>
<div class="t" style="left:843px;top:520.50px;letter-spacing:-0.797px;width:57px;overflow:hidden">H_</div>
</div>
</body></html>
